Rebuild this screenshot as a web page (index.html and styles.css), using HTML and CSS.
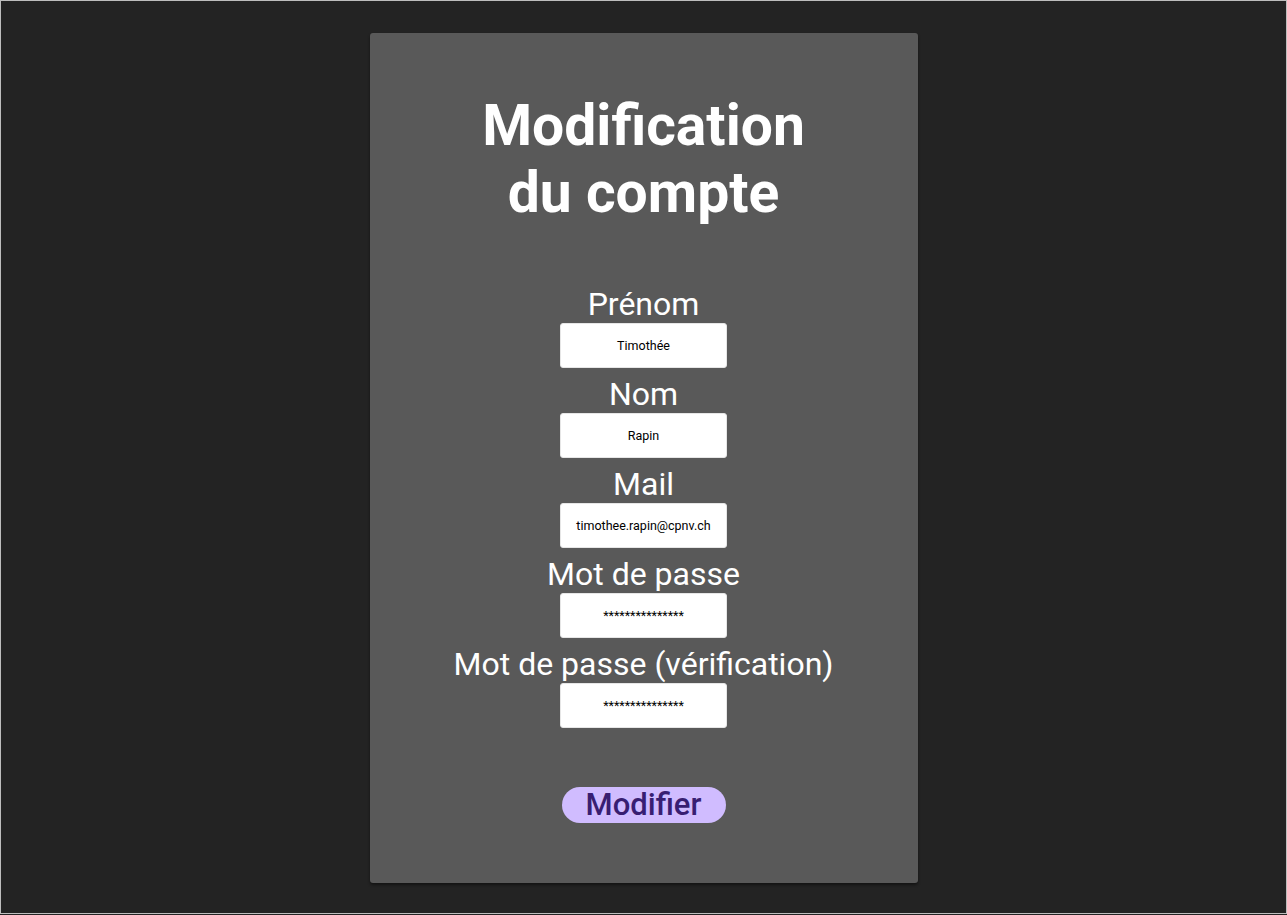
FILE: index.html
```html
<!DOCTYPE html>
<html lang="fr">
<head>
<meta charset="utf-8">
<title>Modification du compte</title>
<link rel="stylesheet" href="styles.css">
</head>
<body>
<div class="frame">
  <main class="card">
    <h1 class="title">Modification<br>du compte</h1>
    <form class="form">
      <label class="label" for="prenom">Prénom</label>
      <input class="field" id="prenom" type="text" value="Timothée">
      <label class="label" for="nom">Nom</label>
      <input class="field" id="nom" type="text" value="Rapin">
      <label class="label" for="mail">Mail</label>
      <input class="field" id="mail" type="text" value="timothee.rapin@cpnv.ch">
      <label class="label" for="mdp">Mot de passe</label>
      <input class="field" id="mdp" type="text" value="***************">
      <label class="label" for="mdp2">Mot de passe (vérification)</label>
      <input class="field" id="mdp2" type="text" value="***************">
      <button class="button" type="button">Modifier</button>
    </form>
  </main>
</div>
</body>
</html>
```

FILE: styles.css
```css
html, body {
  margin: 0;
  padding: 0;
  background: #232323;
}
body {
  font-family: Roboto, "Liberation Sans", sans-serif;
}
.frame {
  box-sizing: border-box;
  width: 1287px;
  height: 914px;
  border: 1px solid #bdbdbd;
  display: flex;
  justify-content: center;
  align-items: flex-start;
  padding-top: 32px;
}
.card {
  box-sizing: border-box;
  width: 548px;
  height: 850px;
  background: #595959;
  border-radius: 3px;
  box-shadow: 0 2px 3px rgba(0, 0, 0, 0.45);
  padding-top: 59px;
  display: flex;
  flex-direction: column;
  align-items: center;
}
.title {
  margin: 0;
  font-size: 57px;
  font-weight: 700;
  line-height: 67px;
  color: #ffffff;
  text-align: center;
}
.form {
  margin-top: 60px;
  display: flex;
  flex-direction: column;
  align-items: center;
}
.label {
  display: block;
  font-size: 32px;
  line-height: 37px;
  color: #ffffff;
  margin-top: 8px;
  white-space: nowrap;
}
.label:first-child {
  margin-top: 0;
}
.field {
  box-sizing: border-box;
  width: 167px;
  height: 45px;
  border: 1px solid #e6e6e6;
  border-radius: 3px;
  background: #ffffff;
  color: #000000;
  font-family: Roboto, "Liberation Sans", sans-serif;
  font-size: 12.5px;
  text-align: center;
  padding: 0 4px;
  outline: none;
}
.button {
  margin-top: 59px;
  width: 164px;
  height: 36px;
  border: none;
  border-radius: 18px;
  background: #d0bcff;
  color: #381e72;
  font-family: Roboto, "Liberation Sans", sans-serif;
  font-size: 31px;
  font-weight: 500;
  line-height: 36px;
  padding: 0;
  cursor: pointer;
}
```
